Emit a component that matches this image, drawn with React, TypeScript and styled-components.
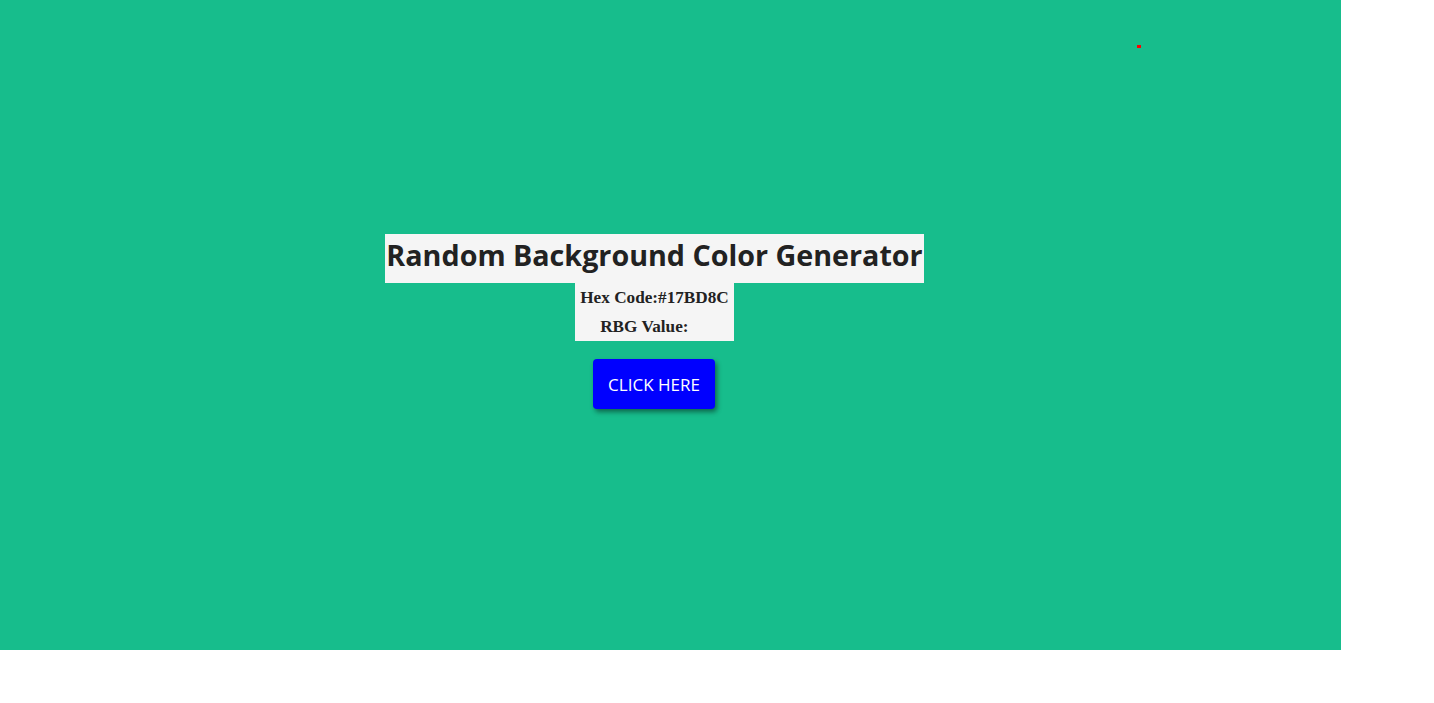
import React from "react";
import styled, { createGlobalStyle } from "styled-components";

const Global = createGlobalStyle`
  html, body { margin: 0; padding: 0; background: #ffffff; }
  #root { width: 100%; }
`;

const Page = styled.div`
  position: relative;
  width: 1341px;
  height: 650px;
  background: #17bd8c;
  box-sizing: border-box;
  padding: 234px 32px 0 0;
  display: flex;
  flex-direction: column;
  align-items: center;
`;

const Title = styled.h1`
  margin: 0;
  background: #f5f5f5;
  color: #222222;
  font-family: "Open Sans", sans-serif;
  font-weight: 700;
  font-size: 28.7px;
  line-height: 41px;
  padding: 0 1px 8px;
  white-space: nowrap;
`;

const Info = styled.div`
  background: #f5f5f5;
  padding: 0 5px;
  display: flex;
  flex-direction: column;
`;

const Line = styled.div`
  font-family: "Liberation Serif", serif;
  font-weight: 700;
  font-size: 17.2px;
  line-height: 29px;
  color: #222222;
  text-align: center;
  white-space: nowrap;
`;

const Value = styled.span`
  display: inline-block;
  width: 16px;
`;

const Button = styled.button`
  margin-top: 18px;
  margin-right: 1px;
  width: 122px;
  height: 50px;
  padding: 0;
  background: #0000ff;
  color: #ffffff;
  border: none;
  border-radius: 4px;
  font-family: "Open Sans", sans-serif;
  font-size: 17px;
  box-shadow: 2px 3px 5px rgba(0, 0, 0, 0.45);
  cursor: pointer;
`;

const Dot = styled.div`
  position: absolute;
  left: 1137px;
  top: 45px;
  width: 4px;
  height: 3px;
  background: #ff0000;
`;

export default function App() {
  return (
    <>
      <Global />
      <Page>
        <Dot />
        <Title>Random Background Color Generator</Title>
        <Info>
          <Line>Hex Code:#17BD8C</Line>
          <Line>
            RBG Value: <Value />
          </Line>
        </Info>
        <Button>CLICK HERE</Button>
      </Page>
    </>
  );
}
